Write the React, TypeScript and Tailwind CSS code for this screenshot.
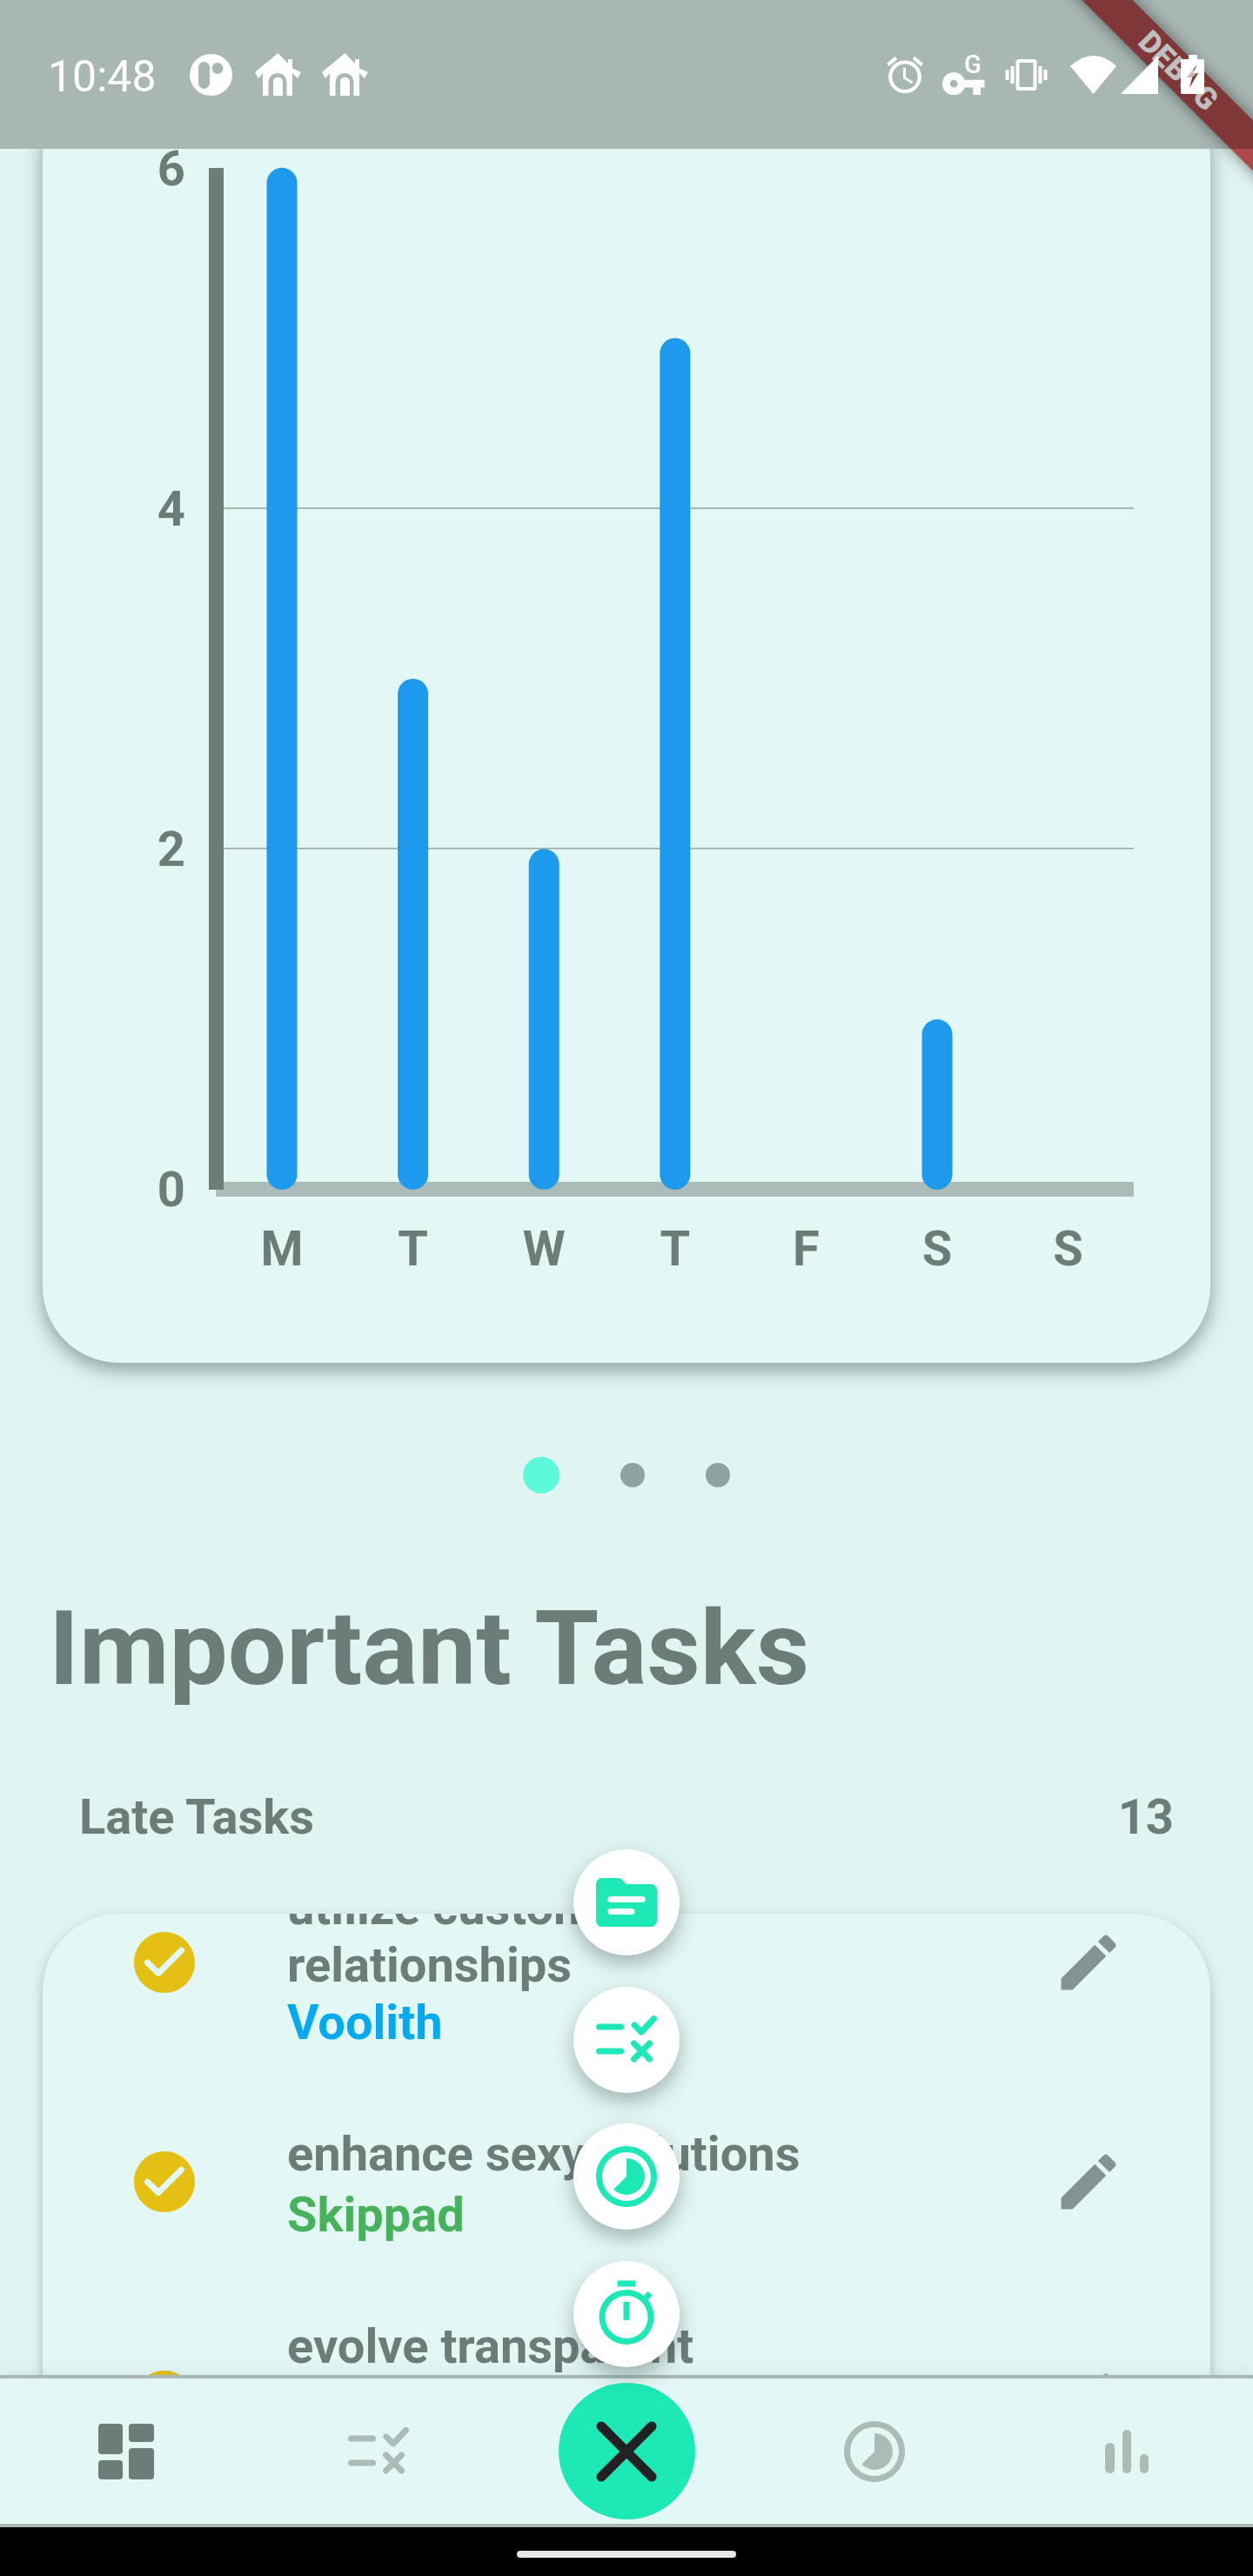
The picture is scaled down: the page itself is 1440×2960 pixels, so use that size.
import React from 'react';

const days = [
  { label: 'M', value: 6 },
  { label: 'T', value: 3 },
  { label: 'W', value: 2 },
  { label: 'T', value: 5 },
  { label: 'F', value: 0 },
  { label: 'S', value: 1 },
  { label: 'S', value: 0 },
];

const tasks = [
  { title: 'utilize customer relationships', project: 'Voolith', projectClass: 'text-[#03a9f1]', blockClass: '' },
  { title: 'enhance sexy solutions', project: 'Skippad', projectClass: 'text-[#48b15c] mt-1', blockClass: '' },
  { title: 'evolve transparent', project: '', projectClass: '', blockClass: 'min-h-[198px]' },
];

const EDIT = 'M3 17.25V21h3.75L17.81 9.94l-3.75-3.75L3 17.25zM20.71 7.04c.39-.39.39-1.02 0-1.41l-2.34-2.34c-.39-.39-1.02-.39-1.41 0l-1.83 1.83 3.75 3.75 1.83-1.83z';
const CHECK_CIRCLE = 'M12 2C6.48 2 2 6.48 2 12s4.48 10 10 10 10-4.48 10-10S17.52 2 12 2zM9.29 16.29L5.7 12.7c-.39-.39-.39-1.02 0-1.41.39-.39 1.02-.39 1.41 0L10 14.17l6.88-6.88c.39-.39 1.02-.39 1.41 0 .39.39.39 1.02 0 1.41l-7.59 7.59c-.38.39-1.02.39-1.41 0z';
const TIMELAPSE = 'M16.24 7.76C15.07 6.59 13.54 6 12 6v6l-4.24 4.24c2.34 2.34 6.14 2.34 8.49 0 2.34-2.34 2.34-6.14-.01-8.48zM12 2C6.48 2 2 6.48 2 12s4.48 10 10 10 10-4.48 10-10S17.52 2 12 2zm0 18c-4.42 0-8-3.58-8-8s3.58-8 8-8 8 3.58 8 8-3.58 8-8 8z';
const TIMER = 'M15 1H9v2h6V1zm-4 13h2V8h-2v6zm8.03-6.61l1.42-1.42c-.43-.51-.9-.99-1.41-1.41l-1.42 1.42C16.07 4.74 14.12 4 12 4c-4.97 0-9 4.03-9 9s4.02 9 9 9 9-4.03 9-9c0-2.12-.74-4.07-1.97-5.61zM12 20c-3.87 0-7-3.13-7-7s3.13-7 7-7 7 3.13 7 7-3.13 7-7 7z';
const FOLDER = 'M10.59 4.59C10.21 4.21 9.7 4 9.17 4H4c-1.1 0-1.99.9-1.99 2L2 18c0 1.1.9 2 2 2h16c1.1 0 2-.9 2-2V8c0-1.1-.9-2-2-2h-8l-1.41-1.41z';

const MaterialIcon = ({ d, fill }: { d: string; fill: string }) => (
  <svg width="84" height="84" viewBox="0 0 24 24" fill={fill} className="shrink-0">
    <path d={d} />
  </svg>
);

const TasksIcon = ({ color }: { color: string }) => (
  <svg width="70" height="56" viewBox="0 0 70 56" fill="none" stroke={color} strokeWidth="7" strokeLinecap="round" strokeLinejoin="round" className="shrink-0">
    <path d="M3.5 13H28.5M3.5 41H28.5" />
    <path d="M44 11L52 19L66.5 3.5" />
    <path d="M43.5 32L61.5 50M61.5 32L43.5 50" />
  </svg>
);

const HomeIcon = () => (
  <svg width="53" height="49" viewBox="0 0 53 49" fill="#fff" className="shrink-0">
    <path
      fillRule="evenodd"
      d="M26.5 0L38 12V7H43V17.5L53 22L49 29L43 23V49H9V23L4 29L0 22ZM15.5 49V33.5A10.5 10.5 0 0 1 36.5 33.5V49H32V33A5.5 5.5 0 0 0 21 33V49Z"
    />
  </svg>
);

const FabButton = ({ children }: { children: React.ReactNode }) => (
  <div className="w-[122px] h-[122px] rounded-full bg-white flex items-center justify-center shadow-[0_10px_22px_rgba(40,60,60,0.35)]">
    {children}
  </div>
);

const ChartCard = () => (
  <div className="-mt-[76px] mx-[49px] h-[1471px] rounded-[88px] bg-[#e3f7f5] shadow-[0_8px_22px_rgba(50,75,75,0.5)]">
    {/* viewBox uses page coordinates */}
    <svg width="1342" height="1471" viewBox="49 95 1342 1471" className="block">
      <rect x="257" y="583" width="1046" height="2" fill="#a9b8b5" />
      <rect x="257" y="974" width="1046" height="2" fill="#a9b8b5" />
      <rect x="248" y="1358" width="1055" height="17" fill="#aabbb8" />
      <rect x="240" y="193" width="17" height="1174" fill="#6b7c79" />
      {days.map((day, i) =>
        day.value > 0 ? (
          <rect
            key={i}
            x={306.5 + i * 150.6}
            y={1367 - day.value * 195.7}
            width="35"
            height={day.value * 195.7}
            rx="17.5"
            fill="#1e9aec"
          />
        ) : null
      )}
      <g fill="#6b7c79" fontSize="56" fontWeight="700">
        {[
          { label: '6', y: 213 },
          { label: '4', y: 604 },
          { label: '2', y: 995 },
          { label: '0', y: 1386 },
        ].map((tick) => (
          <text key={tick.label} x="213" y={tick.y} textAnchor="end">
            {tick.label}
          </text>
        ))}
        {days.map((day, i) => (
          <text key={i} x={324 + i * 150.6} y="1454" textAnchor="middle">
            {day.label}
          </text>
        ))}
      </g>
    </svg>
  </div>
);

const TaskRow = ({ task }: { task: (typeof tasks)[number] }) => (
  <div className="flex items-center justify-between pl-[98px] pr-[98px]">
    <div className="flex items-center gap-[99px]">
      <div className="mb-[6px]">
        <MaterialIcon d={CHECK_CIRCLE} fill="#e4c015" />
      </div>
      <div className={`w-[640px] text-[56px] leading-[66px] font-bold text-[#6b7c79] ${task.blockClass}`}>
        <div>{task.title}</div>
        {task.project && <div className={task.projectClass}>{task.project}</div>}
      </div>
    </div>
    <div className="mb-[6px]">
      <MaterialIcon d={EDIT} fill="#839391" />
    </div>
  </div>
);

export default function App() {
  return (
    <div className="relative w-[1440px] h-[2960px] overflow-hidden bg-[#e0f4f1] flex flex-col font-['Roboto',sans-serif]">
      {/* Status bar */}
      <div className="relative z-20 h-[171px] shrink-0 bg-black/25 flex items-center justify-between pl-[55px] pr-[56px]">
        <div className="flex items-center">
          <span className="w-[163px] pt-[5px] text-[50px] leading-none text-white">10:48</span>
          <svg width="49" height="48" viewBox="0 0 49 48" className="shrink-0 mr-[26px]">
            <path
              fill="#fff"
              fillRule="evenodd"
              d="M24.5 0A24.5 24 0 1 0 24.5 48A24.5 24 0 1 0 24.5 0ZM16.5 9A6.5 6.5 0 0 1 23 15.5V33.5A6.5 6.5 0 0 1 10 33.5V15.5A6.5 6.5 0 0 1 16.5 9ZM32 10A6.5 6.5 0 1 1 32 23A6.5 6.5 0 1 1 32 10Z"
            />
          </svg>
          <div className="flex items-center gap-[24px]">
            <HomeIcon />
            <HomeIcon />
          </div>
        </div>
        <div className="flex items-center">
          <svg width="42" height="44" viewBox="2 1.86 20 20.14" fill="#fff" className="shrink-0 mr-[22px]">
            <path d="M22 5.72l-4.6-3.86-1.29 1.53 4.6 3.86L22 5.72zM7.88 3.39L6.6 1.86 2 5.71l1.29 1.53 4.59-3.85zM12.5 8H11v6l4.75 2.85.75-1.23-4-2.37V8zM12 4c-4.97 0-9 4.03-9 9s4.03 9 9 9c4.97 0 9-4.03 9-9s-4.03-9-9-9zm0 16c-3.87 0-7-3.13-7-7s3.13-7 7-7 7 3.13 7 7-3.13 7-7 7z" />
          </svg>
          <svg width="49" height="46" viewBox="0 0 49 46" fill="#fff" className="shrink-0 mr-[23px]">
            <text x="25" y="21" fontSize="29" fontWeight="500">G</text>
            <path transform="translate(-2.2 6.8) scale(2.2)" d="M12.65 10C11.83 7.67 9.61 6 7 6c-3.31 0-6 2.69-6 6s2.69 6 6 6c2.61 0 4.83-1.67 5.65-4H17v4h4v-4h2v-4H12.65zM7 14c-1.1 0-2-.9-2-2s.9-2 2-2 2 .9 2 2-.9 2-2 2z" />
          </svg>
          <svg width="49" height="36" viewBox="0 3 24 18" fill="#fff" className="shrink-0 mr-[26px]">
            <path d="M0 15h2V9H0v6zm3 2h2V7H3v10zm19-8v6h2V9h-2zm-3 8h2V7h-2v10zM16.5 3h-9C6.67 3 6 3.67 6 4.5v15c0 .83.67 1.5 1.5 1.5h9c.83 0 1.5-.67 1.5-1.5v-15c0-.83-.67-1.5-1.5-1.5zM16 19H8V5h8v14z" />
          </svg>
          <svg width="53" height="44" viewBox="0 0 53 44" fill="#fff" className="shrink-0 mr-[5px]">
            <path d="M0 12Q26.5 -12 53 12L26.5 44Z" />
          </svg>
          <svg width="43" height="44" viewBox="0 0 43 44" fill="#fff" className="shrink-0 mr-[26px]">
            <path d="M43 0V44H0Z" />
          </svg>
          <svg width="27" height="45" viewBox="0 0 27 45" fill="#fff" className="shrink-0">
            <path
              fillRule="evenodd"
              d="M9 0H19V5H25A2 2 0 0 1 27 7V43A2 2 0 0 1 25 45H2A2 2 0 0 1 0 43V7A2 2 0 0 1 2 5H9ZM19 11L7 26H13L10 38L20 21H14Z"
            />
          </svg>
        </div>
      </div>

      {/* Debug banner */}
      <div className="absolute z-10 left-[1154px] top-[61px] w-[400px] h-[41px] rotate-45 bg-[#aa4a4a] shadow-[0_0_18px_rgba(0,0,0,0.5)] flex items-center justify-center text-[35px] leading-none font-black text-white">
        DEBUG
      </div>

      {/* Scrolling content */}
      <div className="flex-1 min-h-0 overflow-hidden">
        <ChartCard />

        <div className="mt-[108px] h-[42px] flex items-center justify-center gap-[70px]">
          <div className="w-[42px] h-[42px] rounded-full bg-[#5cf9db]" />
          <div className="w-[28px] h-[28px] rounded-full bg-[#8ea2a0]" />
          <div className="w-[28px] h-[28px] rounded-full bg-[#8ea2a0]" />
        </div>

        <h1 className="mt-[108px] pl-[56px] text-[119.5px] leading-[140px] font-bold text-[#6b7c79]">Important Tasks</h1>

        <div className="mt-[91px] px-[91px] flex justify-between text-[56px] leading-[66px] font-bold text-[#6b7c79]">
          <span>Late Tasks</span>
          <span>13</span>
        </div>

        <div className="mt-[78px] mx-[49px] h-[700px] rounded-t-[88px] overflow-hidden bg-[#e3f7f5] shadow-[0_6px_14px_rgba(50,75,75,0.32)]">
          <div className="-mt-[40px] flex flex-col gap-[85px]">
            {tasks.map((task) => (
              <TaskRow key={task.title} task={task} />
            ))}
          </div>
        </div>
      </div>

      {/* Bottom navigation */}
      <div className="relative shrink-0 h-[175px] border-y-4 border-[#a9b8b5] bg-[#e3f7f5] px-[103px] flex items-center justify-between shadow-[0_-6px_14px_rgba(50,75,75,0.06)]">
        <div className="w-[84px] flex justify-center">
          <svg width="64" height="64" viewBox="0 0 64 64" fill="#6b7c79">
            <rect x="0" y="0" width="28" height="35" rx="4" />
            <rect x="35" y="0" width="29" height="21" rx="4" />
            <rect x="0" y="42" width="28" height="22" rx="4" />
            <rect x="35" y="28" width="29" height="36" rx="4" />
          </svg>
        </div>
        <div className="w-[84px] flex justify-center">
          <TasksIcon color="#aabbb8" />
        </div>
        <div className="w-[74px] flex justify-center">
          <button className="w-[157px] h-[157px] shrink-0 rounded-full bg-[#1de9b6] flex items-center justify-center">
            <svg width="84" height="84" viewBox="0 0 84 84" fill="none" stroke="#212121" strokeWidth="11" strokeLinecap="round">
              <path d="M13 13L71 71M71 13L13 71" />
            </svg>
          </button>
        </div>
        <div className="w-[84px] flex justify-center">
          <MaterialIcon d={TIMELAPSE} fill="#aabbb8" />
        </div>
        <div className="w-[84px] flex justify-center">
          <svg width="50" height="50" viewBox="0 0 50 50" fill="#aabbb8">
            <rect x="0" y="15" width="11" height="35" rx="5.5" />
            <rect x="20" y="0" width="10" height="50" rx="5" />
            <rect x="40" y="28" width="10" height="22" rx="5" />
          </svg>
        </div>
      </div>

      {/* Gesture bar */}
      <div className="shrink-0 h-[56px] bg-black flex justify-center pt-[27px]">
        <div className="w-[252px] h-2 rounded-full bg-[#e8e8e8]" />
      </div>

      {/* Speed dial */}
      <div className="absolute z-10 top-[2125px] left-[659px] flex flex-col gap-[35.5px]">
        <FabButton>
          <svg width="84" height="84" viewBox="0 0 24 24" className="shrink-0">
            <path d={FOLDER} fill="#1de9b6" />
            <path d="M6.8 11H17.2M6.8 15H13.7" stroke="#fff" strokeWidth="2" strokeLinecap="round" />
          </svg>
        </FabButton>
        <FabButton>
          <TasksIcon color="#1de9b6" />
        </FabButton>
        <FabButton>
          <MaterialIcon d={TIMELAPSE} fill="#1de9b6" />
        </FabButton>
        <FabButton>
          <MaterialIcon d={TIMER} fill="#1de9b6" />
        </FabButton>
      </div>
    </div>
  );
}
